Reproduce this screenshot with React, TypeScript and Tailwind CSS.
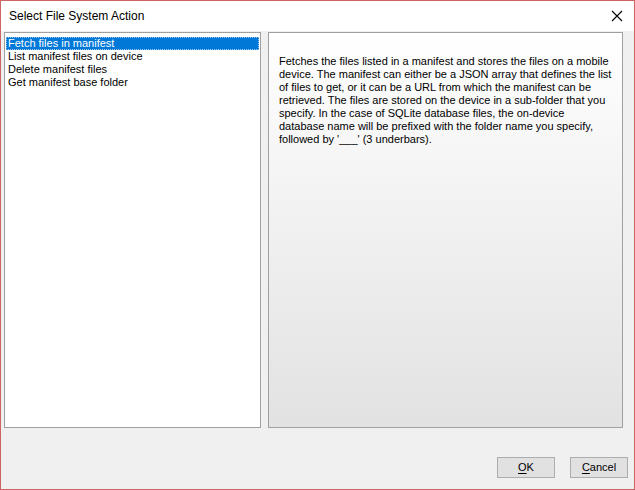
import React, { useState } from "react";

const actions = [
  "Fetch files in manifest",
  "List manifest files on device",
  "Delete manifest files",
  "Get manifest base folder",
];

const descriptionLines = [
  "Fetches the files listed in a manifest and stores the files on a mobile",
  "device. The manifest can either be a JSON array that defines the list",
  "of files to get, or it can be a URL from which the manifest can be",
  "retrieved. The files are stored on the device in a sub-folder that you",
  "specify. In the case of SQLite database files, the on-device",
  "database name will be prefixed with the folder name you specify,",
  "followed by '___' (3 underbars).",
];

function DialogButton({ label, accessKey }: { label: string; accessKey: string }) {
  const rest = label.slice(1);
  return (
    <button className="flex h-[21px] w-[58px] items-center justify-center border border-[#adadad] bg-[#e1e1e1] text-[11px] text-black">
      <span className="underline underline-offset-2">{accessKey}</span>
      {rest}
    </button>
  );
}

export default function App() {
  const [selected, setSelected] = useState(0);

  return (
    <div
      className="flex h-[490px] w-[635px] flex-col border border-[#cd6464] bg-[#f0f0f0]"
      style={{ fontFamily: '"Liberation Sans", Arial, sans-serif' }}
    >
      <div className="flex h-[30px] items-center justify-between bg-white pl-[8px] pr-[9px]">
        <span className="text-[12px] text-black">Select File System Action</span>
        <svg width="12" height="12" viewBox="0 0 12 12" className="mr-[2px]">
          <path d="M1 1 L11 11 M11 1 L1 11" stroke="#000" strokeWidth="1.1" />
        </svg>
      </div>

      <div className="flex flex-1 flex-col px-[3px] pt-[1px]">
        <div className="flex gap-[7px]">
          <ul className="h-[396px] w-[257px] border border-[#a0a0a0] bg-white px-[1px] pt-[4px] text-[11px] leading-[13px] text-black">
            {actions.map((action, i) => (
              <li
                key={action}
                onClick={() => setSelected(i)}
                className={
                  i === selected
                    ? "h-[13px] bg-[#0078d7] pl-[2px] text-white outline outline-1 -outline-offset-1 outline-dotted outline-[#99c9ef]"
                    : "h-[13px] pl-[2px]"
                }
              >
                {action}
              </li>
            ))}
          </ul>

          <div className="h-[396px] w-[355px] border border-[#a0a0a0] bg-gradient-to-b from-white to-[#e2e2e2] pl-[10px] pt-[22px] text-[11px] leading-[13px] text-black">
            {descriptionLines.map((line) => (
              <div key={line} className="whitespace-nowrap">
                {line}
              </div>
            ))}
          </div>
        </div>

        <div className="mt-[29px] flex justify-end gap-[15px] pr-[3px]">
          <DialogButton label="OK" accessKey="O" />
          <DialogButton label="Cancel" accessKey="C" />
        </div>
      </div>
    </div>
  );
}
